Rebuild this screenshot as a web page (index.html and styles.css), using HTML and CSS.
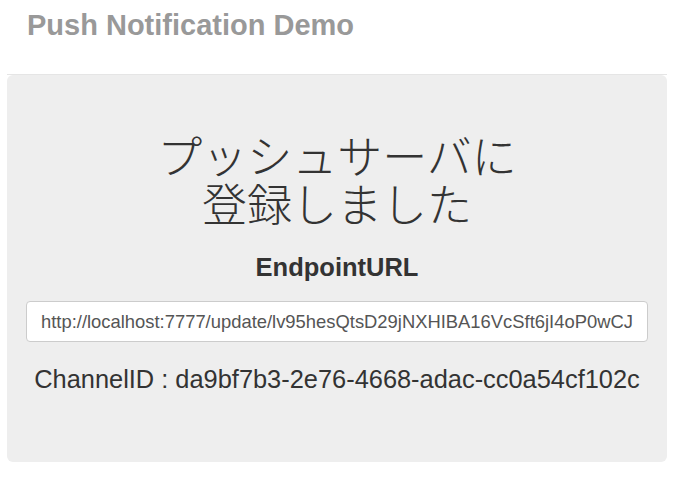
FILE: index.html
```html
<!DOCTYPE html>
<html lang="ja">
<head>
<meta charset="utf-8">
<title>Push Notification Demo</title>
<link rel="stylesheet" href="styles.css">
</head>
<body>
<div class="container">
  <div class="header">
    <h3 class="brand">Push Notification Demo</h3>
  </div>
  <div class="jumbotron">
    <h1 class="title"><span class="title-line">プッシュサーバに</span><span class="title-line">登録しました</span></h1>
    <h3 class="label">EndpointURL</h3>
    <input class="url" type="text" readonly value="http://localhost:7777/update/lv95hesQtsD29jNXHIBA16VcSft6jI4oP0wCJ">
    <p class="channel">ChannelID : da9bf7b3-2e76-4668-adac-cc0a54cf102c</p>
  </div>
</div>
</body>
</html>
```

FILE: styles.css
```css
html, body {
  margin: 0;
  padding: 0;
  background: #fff;
  font-family: "Liberation Sans", Arial, sans-serif;
  color: #333;
}
.container {
  margin: 0 11px 0 7px;
}
.header {
  border-bottom: 1px solid #e5e5e5;
  height: 75px;
  padding: 0 20px;
  box-sizing: border-box;
}
.brand {
  margin: 0;
  padding-top: 8px;
  font-size: 29px;
  line-height: 34px;
  font-weight: bold;
  color: #999;
}
.jumbotron {
  background: #eee;
  border-radius: 6px;
  height: 387px;
  padding: 56px 19px 0;
  box-sizing: border-box;
  text-align: center;
}
.title {
  margin: 0;
  font-family: "Noto Sans CJK JP", sans-serif;
  font-weight: 300;
  font-size: 45px;
  line-height: 48px;
  color: #333;
}
.title-line {
  display: block;
  height: 48px;
}
.label {
  margin: 25px 0 0;
  font-size: 25.5px;
  line-height: 30px;
  font-weight: bold;
  color: #333;
}
.url {
  display: block;
  width: 100%;
  box-sizing: border-box;
  margin-top: 19px;
  height: 41px;
  padding: 0 14px;
  border: 1px solid #ccc;
  border-radius: 4px;
  background: #fff;
  font-family: "Liberation Sans", Arial, sans-serif;
  font-size: 18.4px;
  color: #555;
  outline: none;
}
.channel {
  margin: 22px 0 0;
  font-size: 25.4px;
  line-height: 30px;
  color: #333;
}
```
